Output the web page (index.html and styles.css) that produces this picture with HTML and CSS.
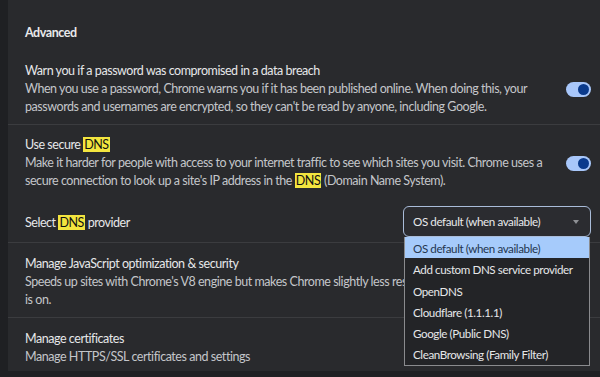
FILE: index.html
```html
<!DOCTYPE html>
<html lang="en">
<head>
  <meta charset="UTF-8" />
  <title>Settings - Advanced</title>
  <link rel="stylesheet" href="styles.css">
</head>
<body>

<div class="page">
  <section class="card">
    <h2 class="card-title">Advanced</h2>

    <div class="row first">
      <div class="row-text">
        <div class="row-label">Warn you if a password was compromised in a data breach</div>
        <div class="row-sub">When you use a password, Chrome warns you if it has been published online. When doing this, your passwords and usernames are encrypted, so they can't be read by anyone, including Google.</div>
      </div>
      <span class="toggle"></span>
    </div>

    <div class="row has-sub">
      <div class="row-text">
        <div class="row-label">Use secure <mark>DNS</mark></div>
        <div class="row-sub">Make it harder for people with access to your internet traffic to see which sites you visit. Chrome uses a secure connection to look up a site's IP address in the <mark>DNS</mark> (Domain Name System).</div>
      </div>
      <span class="toggle"></span>
    </div>

    <div class="row sub-row">
      <div class="row-text">
        <div class="row-label">Select <mark>DNS</mark> provider</div>
      </div>
      <div class="select">
        <div class="select-box">
          <span>OS default (when available)</span>
          <span class="arrow"></span>
        </div>
        <ul class="dropdown">
          <li class="active">OS default (when available)</li>
          <li>Add custom DNS service provider</li>
          <li>OpenDNS</li>
          <li>Cloudflare (1.1.1.1)</li>
          <li>Google (Public DNS)</li>
          <li>CleanBrowsing (Family Filter)</li>
        </ul>
      </div>
    </div>

    <div class="row">
      <div class="row-text">
        <div class="row-label">Manage JavaScript optimization &amp; security</div>
        <div class="row-sub">Speeds up sites with Chrome's V8 engine but makes Chrome slightly less responsive when this<br>is on.</div>
      </div>
    </div>

    <div class="row">
      <div class="row-text">
        <div class="row-label">Manage certificates</div>
        <div class="row-sub">Manage HTTPS/SSL certificates and settings</div>
      </div>
    </div>
  </section>
</div>

</body>
</html>
```

FILE: styles.css
```css
* {
  margin: 0; padding: 0; box-sizing: border-box;
}

body {
  background: #1f2023;
  color: #e3e4e6;
  font-family: 'Lato', 'Liberation Sans', sans-serif;
  font-size: 12.5px;
  letter-spacing: -0.45px;
  line-height: 18px;
  overflow: hidden;
}

.page {
  padding-left: 8px;
}

.card {
  background: #292a2d;
  height: 371px;
  overflow: hidden;
}

.card-title {
  font-size: 12.5px;
  font-weight: bold;
  padding: 24px 17px 8px;
  color: #e8e9eb;
}

.row {
  display: flex;
  align-items: center;
  gap: 16px;
  padding: 12px 9px 8px 17px;
  border-top: 1px solid #3b3c3f;
}

.row.first {
  border-top-color: transparent;
  padding: 11px 9px 8px 17px;
}

.row.has-sub {
  padding-bottom: 0;
  padding-top: 11px;
}

.row.sub-row {
  border-top: none;
  padding: 16px 9px 5px 17px;
}

.row-text {
  flex: 1;
}

.row-label {
  color: #e6e7e9;
}

.sub-row .row-label {
  padding-top: 2px;
}

.row-sub {
  color: #c4c6ca;
}

mark {
  background: #f3e53f;
  color: #111;
  padding: 0 1px;
}

.toggle {
  position: relative;
  width: 25px;
  height: 15px;
  border-radius: 8px;
  background: #a8c7fa;
  flex-shrink: 0;
}

.toggle::after {
  content: "";
  position: absolute;
  right: 2px;
  top: 2px;
  width: 11px;
  height: 11px;
  border-radius: 50%;
  background: #0a3a8c;
}

.select {
  position: relative;
  width: 188px;
  flex-shrink: 0;
  font-size: 11.6px;
  letter-spacing: -0.4px;
}

.select-box {
  display: flex;
  align-items: center;
  justify-content: space-between;
  height: 31px;
  padding: 1px 11px 0 9px;
  border: 1px solid #a9bcd9;
  border-radius: 6px;
  background: #2b2c30;
  color: #e8e9eb;
}

.arrow {
  width: 0;
  height: 0;
  border-left: 3px solid transparent;
  border-right: 3px solid transparent;
  border-top: 4px solid #8e9094;
}

.dropdown {
  position: absolute;
  top: 100%;
  left: 1px;
  right: 1px;
  list-style: none;
  background: #232427;
  border: 1px solid #8a8b8e;
  border-top: none;
}

.dropdown li {
  height: 21.3px;
  line-height: 19px;
  padding: 2px 0 0 8px;
  color: #e6e7e9;
  white-space: nowrap;
}

.dropdown li.active {
  background: #a6cbfb;
  color: #24364f;
}
```
